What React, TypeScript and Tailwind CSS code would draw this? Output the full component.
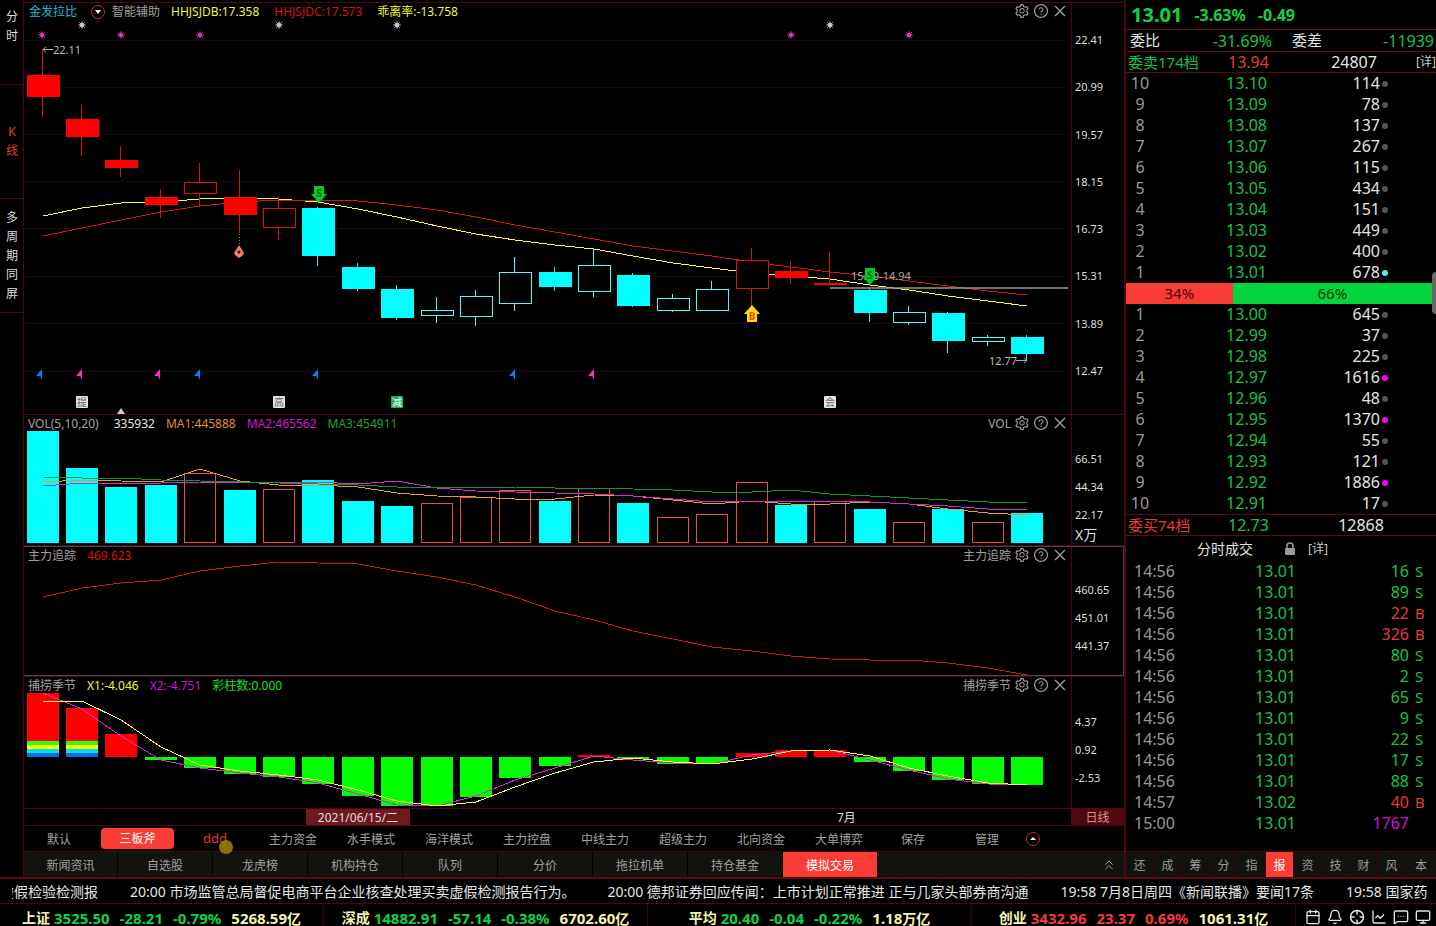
import type { ReactNode } from "react";
import {
  AiOutlineClose,
  AiOutlineQuestionCircle,
  AiOutlineSetting,
} from "react-icons/ai";
import {
  Bell,
  Calendar,
  ChartLine,
  ChevronsUp,
  MessageSquareMore,
  Monitor,
} from "lucide-react";

// x of the n-th trading day in every chart
const dayX = (i: number) => Math.floor(43.2 + i * 39.38);

const linePoints = (ys: number[]) =>
  ys.map((y, i) => `${dayX(i)},${y}`).join(" ");

// [high, top of body, bottom of body, low, kind]
type Candle = [number, number, number, number, "red" | "redOpen" | "cyan" | "cyanOpen"];

const candles: Candle[] = [
  [49, 75, 97, 117, "red"],
  [105, 119, 137, 156, "red"],
  [146, 160, 168, 177, "red"],
  [189, 197, 205, 218, "red"],
  [163, 182, 194, 207, "redOpen"],
  [170, 197, 215, 233, "red"],
  [196, 208, 228, 240, "redOpen"],
  [207, 208, 256, 266, "cyan"],
  [263, 267, 289, 291, "cyan"],
  [285, 289, 318, 320, "cyan"],
  [297, 310, 316, 323, "cyanOpen"],
  [290, 296, 317, 326, "cyanOpen"],
  [257, 272, 304, 311, "cyanOpen"],
  [267, 272, 287, 291, "cyan"],
  [248, 265, 292, 297, "cyanOpen"],
  [273, 275, 306, 307, "cyan"],
  [294, 298, 311, 312, "cyanOpen"],
  [281, 289, 311, 311, "cyanOpen"],
  [248, 260, 289, 306, "redOpen"],
  [261, 271, 278, 284, "red"],
  [252, 283, 285, 285, "red"],
  [289, 290, 313, 322, "cyan"],
  [306, 312, 323, 325, "cyanOpen"],
  [312, 313, 341, 353, "cyan"],
  [335, 337, 342, 346, "cyanOpen"],
  [335, 337, 354, 360, "cyan"],
];

const yellowMa = [
  216, 208, 203, 202, 199, 198, 199, 202, 209, 217, 226, 234, 240, 245, 249,
  256, 263, 268, 273, 276, 279, 285, 290, 296, 301, 306,
];
const redMa = [
  236, 228, 220, 212, 206, 202, 200, 200, 201, 205, 210, 217, 225, 232, 239,
  246, 251, 256, 262, 267, 272, 276, 281, 286, 291, 295,
];

// negative = rising day, drawn hollow
const volumes = [
  431, 468, 487, 485, -473, 490, -489, 480, 501, 506, -503, -497, -490, 501,
  -488, 503, -517, -514, -482, 505, -501, 509, -522, 509, -522, 513,
];
const volMa1 = [
  482, 480, 481, 482, 469, 481, 485, 485, 487, 493, 496, 497, 499, 499, 495,
  496, 500, 504, 501, 504, 504, 502, 504, 509, 513, 515,
];
const volMa2 = [
  486, 483, 483, 483, 482, 482, 482, 482, 484, 481, 488, 491, 492, 493, 494,
  496, 499, 502, 501, 501, 501, 502, 504, 506, 509, 509,
];
const volMa3 = [
  477, 478, 478, 480, 481, 482, 483, 484, 485, 487, 487, 487, 487, 488, 488,
  489, 490, 492, 492, 490, 494, 496, 498, 500, 502, 502,
];

const mainForce = [
  597, 588, 583, 580, 571, 566, 562, 563, 564, 571, 577, 585, 597, 611, 620,
  631, 639, 647, 651, 656, 659, 660, 660, 663, 668, 675,
];

const seasonBars = [
  693, 708, 734, 760, 768, 774, 777, 784, 796, 806, 806, 797, 778, 766, 755,
  759, 764, 763, 753, 750, 750, 762, 771, 780, 784, 785,
];
const seasonX1 = [
  701, 701, 720, 747, 765, 771, 775, 780, 790, 801, 806, 802, 787, 773, 762,
  758, 762, 764, 759, 751, 750, 756, 768, 776, 783, 785,
];
const seasonX2 = [
  693, 709, 736, 760, 768, 773, 777, 783, 794, 805, 806, 796, 780, 768, 756,
  760, 763, 764, 755, 751, 750, 760, 770, 779, 784, 785,
];

const asks: [number, string, number, string?][] = [
  [10, "13.10", 114],
  [9, "13.09", 78],
  [8, "13.08", 137],
  [7, "13.07", 267],
  [6, "13.06", 115],
  [5, "13.05", 434],
  [4, "13.04", 151],
  [3, "13.03", 449],
  [2, "13.02", 400],
  [1, "13.01", 678, "bg-cyan-300"],
];
const bids: [number, string, number, string?][] = [
  [1, "13.00", 645],
  [2, "12.99", 37],
  [3, "12.98", 225],
  [4, "12.97", 1616, "bg-[#f0f]"],
  [5, "12.96", 48],
  [6, "12.95", 1370, "bg-[#f0f]"],
  [7, "12.94", 55],
  [8, "12.93", 121],
  [9, "12.92", 1886, "bg-[#f0f]"],
  [10, "12.91", 17],
];
const sellShare = 34.4;

const trades: [string, string, number, string][] = [
  ["14:56", "13.01", 16, "S"],
  ["14:56", "13.01", 89, "S"],
  ["14:56", "13.01", 22, "B"],
  ["14:56", "13.01", 326, "B"],
  ["14:56", "13.01", 80, "S"],
  ["14:56", "13.01", 2, "S"],
  ["14:56", "13.01", 65, "S"],
  ["14:56", "13.01", 9, "S"],
  ["14:56", "13.01", 22, "S"],
  ["14:56", "13.01", 17, "S"],
  ["14:56", "13.01", 88, "S"],
  ["14:57", "13.02", 40, "B"],
  ["15:00", "13.01", 1767, ""],
];

const indices = [
  { name: "上证", value: "3525.50", diff: "-28.21", pct: "-0.79%", amount: "5268.59", unit: "亿" },
  { name: "深成", value: "14882.91", diff: "-57.14", pct: "-0.38%", amount: "6702.60", unit: "亿" },
  { name: "平均", value: "20.40", diff: "-0.04", pct: "-0.22%", amount: "1.18", unit: "万亿" },
  { name: "创业", value: "3432.96", diff: "23.37", pct: "0.69%", amount: "1061.31", unit: "亿" },
];

const news = [
  "20:00 市场监管总局督促电商平台企业核查处理买卖虚假检测报告行为。",
  "20:00 德邦证券回应传闻：上市计划正常推进 正与几家头部券商沟通",
  "19:58 7月8日周四《新闻联播》要闻17条",
  "19:58 国家药",
];

const templates = ["主力资金", "水手模式", "海洋模式", "主力控盘", "中线主力", "超级主力", "北向资金", "大单博弈"];
const bottomTabs = ["新闻资讯", "自选股", "龙虎榜", "机构持仓", "队列", "分价", "拖拉机单", "持仓基金", "模拟交易"];
const sideTabs = ["还", "成", "筹", "分", "指", "报", "资", "技", "财", "风", "本"];

function Panel({
  header,
  name,
  axis,
  axisClass,
  className = "border-t border-[#4a0812]",
  children,
}: {
  header: ReactNode;
  name?: string;
  axis: ReactNode;
  axisClass: string;
  className?: string;
  children: ReactNode;
}) {
  return (
    <section className={`flex ${className}`}>
      <div className="min-w-0 flex-1">
        <div className="flex h-4 items-center justify-between pr-[3px] pl-1 text-xs leading-4 whitespace-nowrap">
          <div className="flex items-center gap-[11px] pt-[2px]">{header}</div>
          <div className="flex items-center gap-[3px] text-[#a0a0a0]">
            {name && <span className="pt-[2px]">{name}</span>}
            <button aria-label="设置">
              <AiOutlineSetting size={16} />
            </button>
            <button aria-label="帮助">
              <AiOutlineQuestionCircle size={16} />
            </button>
            <button aria-label="关闭">
              <AiOutlineClose size={16} />
            </button>
          </div>
        </div>
        {children}
      </div>
      <div
        className={`flex w-[53px] shrink-0 flex-col border-l border-[#4a0812] pl-[3px] text-[11px] leading-4 text-[#ddd] ${axisClass}`}
      >
        {axis}
      </div>
    </section>
  );
}

function Polyline({ ys, color }: { ys: number[]; color: string }) {
  return (
    <polyline
      points={linePoints(ys)}
      fill="none"
      stroke={color}
      shapeRendering="crispEdges"
    />
  );
}

function Star({ x, y, color }: { x: number; y: number; color: string }) {
  return (
    <g stroke={color} strokeWidth="1">
      <circle cx={x} cy={y} r="2" fill={color} />
      <path
        d={`M${x - 4} ${y}h8M${x} ${y - 4}v8M${x - 3} ${y - 3}l6 6M${x + 3} ${y - 3}l-6 6`}
        opacity="0.7"
      />
    </g>
  );
}

function SellArrow({ x, y }: { x: number; y: number }) {
  return (
    <g>
      <path d={`M${x - 5} ${y}h10v8h3l-8 9l-8 -9h3z`} fill="#0c2" />
      <text x={x} y={y + 11} textAnchor="middle" fontSize="11" fontWeight="bold" fill="#063">
        S
      </text>
    </g>
  );
}

function KLineChart() {
  return (
    <svg viewBox="24 19 1047 395" className="block h-auto w-full">
      <g stroke="#160808" shapeRendering="crispEdges">
        {[41, 88, 135, 182, 229, 277, 324, 372].map((y) => (
          <path key={y} d={`M24 ${y - 0.5}H1068`} />
        ))}
      </g>
      <Polyline ys={yellowMa} color="#ff3" />
      <Polyline ys={redMa} color="#d81414" />
      <g shapeRendering="crispEdges">
        {candles.map(([high, top, bottom, low, kind], i) => {
          const x = dayX(i);
          const open = kind.endsWith("Open");
          const red = kind.startsWith("red");
          const stroke = red ? "#e01010" : open ? "#4ff" : "#0ff";
          return (
            <g key={i} stroke={stroke}>
              <path d={`M${x - 0.5} ${high}V${top}M${x - 0.5} ${bottom}V${low}`} />
              <rect
                x={x - 15.5}
                y={top + 0.5}
                width="32"
                height={bottom - top - 1}
                fill={open ? "#000" : red ? "#f00" : "#0ff"}
                stroke={open ? stroke : red ? "#f00" : "#0ff"}
              />
            </g>
          );
        })}
      </g>

      {[42, 121, 200, 791, 909].map((x) => (
        <Star key={x} x={x} y={35} color="#d03cb0" />
      ))}
      {[82, 279, 397, 830].map((x) => (
        <Star key={x} x={x} y={25} color="#c8c8c8" />
      ))}

      <path d="M43 49.5h10M46 47l-3 2.5l3 2.5" stroke="#aaa" fill="none" />
      <text x="53" y="54" fontSize="11" fill="#bbb">22.11</text>
      <path d="M1016 360.5h11M1024 358l3 2.5l-3 2.5" stroke="#aaa" fill="none" />
      <text x="989" y="365" fontSize="11" fill="#bbb">12.77</text>

      <path d="M239.5 234v12" stroke="#888" strokeDasharray="1 2" />
      <path d="M239 245l5 8l-2 3l-3 2l-3-2l-2-3z" fill="#f08060" />
      <circle cx="239" cy="252" r="1.5" fill="#402" />

      <path d="M830 288h238" stroke="#999" strokeWidth="1.5" />
      <text x="851" y="280" fontSize="11" fill="#aaa">15.50-14.94</text>
      <SellArrow x={319} y={186} />
      <SellArrow x={870} y={268} />
      <path d="M752 305l8 9h-3v8h-10v-8h-3z" fill="#ffe000" />
      <text x="752" y="320" textAnchor="middle" fontSize="10" fontWeight="bold" fill="#f40">
        B
      </text>

      {[40, 198, 316, 513].map((x) => (
        <path key={x} d={`M${x + 2} 369v11l-2 -4h-4z`} fill="#0a7cff" />
      ))}
      {[80, 158, 592].map((x) => (
        <path key={x} d={`M${x + 2} 369v11l-2 -4h-4z`} fill="#ff2cc0" />
      ))}

      {[
        { x: 82, label: "提" },
        { x: 279, label: "高" },
        { x: 397, label: "减" },
        { x: 830, label: "会" },
      ].map(({ x, label }) => (
        <g key={x}>
          <rect x={x - 6} y="396" width="12" height="12" rx="1" fill={label === "减" ? "#18b060" : "#e4e4e4"} />
          <text x={x} y="406" textAnchor="middle" fontSize="10" fill={label === "减" ? "#fff" : "#666"}>
            {label}
          </text>
        </g>
      ))}
      <path d="M121 408l4 6h-8z" fill="#ccc" />
    </svg>
  );
}

function VolumeChart() {
  return (
    <svg viewBox="24 431 1047 114" className="block h-auto w-full">
      <g shapeRendering="crispEdges">
        {volumes.map((v, i) => {
          const top = Math.abs(v);
          return v > 0 ? (
            <rect key={i} x={dayX(i) - 16} y={top} width="32" height={543 - top} fill="#0ff" />
          ) : (
            <rect
              key={i}
              x={dayX(i) - 15.5}
              y={top + 0.5}
              width="31"
              height={542 - top}
              fill="none"
              stroke="#e85048"
            />
          );
        })}
      </g>
      <Polyline ys={volMa1} color="#e0a030" />
      <Polyline ys={volMa2} color="#d828d8" />
      <Polyline ys={volMa3} color="#109838" />
    </svg>
  );
}

function SeasonChart() {
  const zero = 757;
  const stripes = ["#2cff00", "#ff0", "#00e0f0", "#0070f0"];
  return (
    <svg viewBox="24 693 1047 115" className="block h-auto w-full">
      <g shapeRendering="crispEdges">
        {seasonBars.map((y, i) => (
          <rect
            key={i}
            x={dayX(i) - 16}
            y={Math.min(y, zero)}
            width="32"
            height={Math.abs(y - zero)}
            fill={y < zero ? "#f00" : "#0f0"}
          />
        ))}
        {[0, 1].map((i) =>
          stripes.map((fill, n) => (
            <rect key={`${i}-${n}`} x={dayX(i) - 16} y={741 + n * 4} width="32" height="4" fill={fill} />
          ))
        )}
      </g>
      <Polyline ys={seasonX2} color="#d828d8" />
      <Polyline ys={seasonX1} color="#ff3" />
    </svg>
  );
}

function OrderRows({ rows, label }: { rows: typeof asks; label: string }) {
  return (
    <table aria-label={label} className="w-full table-fixed text-base leading-[21px]">
      <colgroup>
        <col className="w-7" />
        <col className="w-[113px]" />
        <col className="w-[113px]" />
        <col />
      </colgroup>
      <tbody>
        {rows.map(([level, price, vol, dot]) => (
          <tr key={level} className="h-[21px]">
            <td className="text-center text-[#999]">{level}</td>
            <td className="text-right text-[#18c050]">{price}</td>
            <td className="text-right text-[#e4e4e4]">{vol}</td>
            <td>
              <span className={`ml-[2px] block size-[6px] rounded-full ${dot ?? "bg-[#555]"}`} />
            </td>
          </tr>
        ))}
      </tbody>
    </table>
  );
}

function QuotePanel() {
  return (
    <aside className="relative flex w-[312px] shrink-0 flex-col overflow-hidden border-l-2 border-[#4a0812] whitespace-nowrap">
      <div className="flex h-[29px] items-center gap-3 pl-[5px] text-base leading-5 font-bold text-[#10d048]">
        <span className="text-xl leading-5">13.01</span>
        <span>-3.63%</span>
        <span>-0.49</span>
      </div>
      <div className="flex h-[22px] items-center border-t border-[#5c0a14] pr-[2px] pl-1 text-base text-[#18c050]">
        <span className="w-[61px] text-[15px] text-[#e4e4e4]">委比</span>
        <span className="w-[81px] text-right">-31.69%</span>
        <span className="ml-5 text-[15px] text-[#e4e4e4]">委差</span>
        <span className="ml-auto">-11939</span>
      </div>
      <div className="flex h-[21px] items-center border-t border-[#5c0a14] pl-[2px] text-base">
        <span className="w-[100px] text-[15px] text-[#18c050]">委卖174档</span>
        <span className="text-[#e43c3c]">13.94</span>
        <span className="w-[108px] text-right text-[#e4e4e4]">24807</span>
        <button className="ml-auto text-xs text-[#ccc]">[详]</button>
      </div>
      <div className="border-t border-[#5c0a14]">
        <OrderRows rows={asks} label="委卖" />
      </div>
      <div className="flex h-[21px] text-center text-[15px] leading-[21px]">
        <div className="bg-[#fa3c36] text-[#4a0a08]" style={{ width: `${sellShare}%` }}>
          34%
        </div>
        <div className="flex-1 bg-[#04d43c] pr-1 text-[#04380e]">66%</div>
      </div>
      <OrderRows rows={bids} label="委买" />
      <div className="flex h-[22px] items-center border-y border-[#5c0a14] pl-[2px] text-base">
        <span className="w-[100px] text-[15px] text-[#e43c3c]">委买74档</span>
        <span className="text-[#18c050]">12.73</span>
        <span className="w-[115px] text-right text-[#e4e4e4]">12868</span>
      </div>
      <div className="flex h-[25px] items-center pl-[71px] text-sm text-[#e4e4e4]">
        <span>分时成交</span>
        <svg viewBox="0 0 12 14" className="ml-[31px] h-[14px] w-3" fill="none">
          <path d="M3 7V4a3 3 0 0 1 6 0v3" stroke="#999" strokeWidth="1.5" />
          <rect x="1" y="6" width="10" height="7" rx="1" fill="#999" />
        </svg>
        <button className="ml-3 text-xs text-[#ccc]">[详]</button>
      </div>
      <table aria-label="分时成交" className="w-full table-fixed text-base leading-[21px]">
        <colgroup>
          <col className="w-[70px]" />
          <col className="w-[100px]" />
          <col className="w-[113px]" />
          <col />
        </colgroup>
        <tbody>
          {trades.map(([time, price, vol, side], i) => {
            const tone =
              side === "S" ? "text-[#18c050]" : side === "B" ? "text-[#e43c3c]" : "text-[#d010d0]";
            return (
              <tr key={i} className="h-[21px]">
                <td className="pl-2 text-[#999]">{time}</td>
                <td className="text-right text-[#18c050]">{price}</td>
                <td className={`text-right ${tone}`}>{vol}</td>
                <td className={`pl-[6px] text-[15px] leading-[21px] ${tone}`}>{side}</td>
              </tr>
            );
          })}
        </tbody>
      </table>
      <div className="mt-auto flex h-[26px] border-t border-[#4a0812] bg-[#12120e] text-xs text-[#999]">
        {sideTabs.map((t) => (
          <button
            key={t}
            className={`border-r border-[#38060e] pt-[2px] last:flex-1 last:border-r-0 ${
              t === "报" ? "w-7 bg-[#fa3c36] text-white" : "w-7"
            }`}
          >
            {t}
          </button>
        ))}
      </div>
      <div className="absolute top-[272px] right-0 h-[42px] w-1 rounded-l bg-[#666]" />
    </aside>
  );
}

function Sidebar() {
  return (
    <nav className="flex w-6 shrink-0 flex-col border-r border-[#4a0812] text-xs leading-[19px] text-[#ddd]">
      <button className="h-[85px] border-b border-[#4a0812] pt-[7px] pr-[5px] pb-10 pl-[6px]">分时</button>
      <button className="h-[114px] border-b border-[#4a0812] pr-[5px] pb-[2px] pl-[6px] text-[#e43c3c]">
        K<br />线
      </button>
      <button className="h-[114px] border-b border-[#4a0812] pr-[5px] pl-[6px]">多周期同屏</button>
    </nav>
  );
}

export default function App() {
  return (
    <div className="overflow-hidden bg-black font-['Noto_Sans','Noto_Sans_CJK_SC',sans-serif]">
      <div className="flex">
        <Sidebar />
        <main className="min-w-0 flex-1 pt-[2px]">
          <Panel
            header={
              <>
                <span className="ml-px text-[#20b8d8]">金发拉比</span>
                <div className="flex items-center gap-[7px]">
                  <button
                    aria-label="选择股票"
                    className="ml-[3px] flex size-[14px] items-center justify-center rounded-full border border-[#c03030] text-white"
                  >
                    <svg viewBox="0 0 6 4" className="h-1 w-[6px]" fill="currentColor">
                      <path d="M0 0h6L3 4z" />
                    </svg>
                  </button>
                  <span className="text-[#a0a0a0]">智能辅助</span>
                </div>
                <div className="flex gap-[15px]">
                  <span className="text-[#f4f43c]">HHJSJDB:17.358</span>
                  <span className="text-[#d81414]">HHJSJDC:17.573</span>
                  <span className="text-[#f4f43c]">乖离率:-13.758</span>
                </div>
              </>
            }
            axisClass="justify-between pt-[29px] pb-[35px]"
            axis={["22.41", "20.99", "19.57", "18.15", "16.73", "15.31", "13.89", "12.47"].map((v) => (
              <span key={v}>{v}</span>
            ))}
          >
            <KLineChart />
          </Panel>

          <Panel
            className="border-y border-[#4a0812]"
            header={
              <>
                <span className="text-[#a0a0a0]">VOL(5,10,20)</span>
                <span className="ml-1 text-[#e4e4e4]">335932</span>
                <span className="text-[#e0902c]">MA1:445888</span>
                <span className="text-[#d818d8]">MA2:465562</span>
                <span className="text-[#18a838]">MA3:454911</span>
              </>
            }
            name="VOL"
            axisClass="gap-3 pt-9"
            axis={
              <>
                <span>66.51</span>
                <span>44.34</span>
                <span>22.17</span>
                <span className="-mt-2 text-sm leading-4">X万</span>
              </>
            }
          >
            <VolumeChart />
          </Panel>

          <Panel
            className="border-y border-[#4c4448] shadow-[inset_-1px_0_#4c4448]"
            header={
              <>
                <span className="text-[#a0a0a0]">主力追踪</span>
                <span className="text-[#d81414]">469.623</span>
              </>
            }
            name="主力追踪"
            axisClass="gap-3 pt-[35px]"
            axis={
              <>
                <span>460.65</span>
                <span>451.01</span>
                <span>441.37</span>
              </>
            }
          >
            <svg viewBox="24 563 1047 112" className="block h-auto w-full overflow-visible">
              <Polyline ys={mainForce} color="#d81414" />
            </svg>
          </Panel>

          <Panel
            header={
              <>
                <span className="text-[#a0a0a0]">捕捞季节</span>
                <span className="text-[#f4f43c]">X1:-4.046</span>
                <span className="text-[#c818c8]">X2:-4.751</span>
                <span className="text-[#18e028]">彩柱数:0.000</span>
              </>
            }
            name="捕捞季节"
            axisClass="gap-3 pt-[37px]"
            axis={
              <>
                <span>4.37</span>
                <span>0.92</span>
                <span>-2.53</span>
              </>
            }
          >
            <SeasonChart />
          </Panel>

          <div className="flex h-[17px] border-t border-[#4a0812] text-xs leading-[18px] text-[#ddd]">
            <span className="ml-[282px] w-[104px] bg-[#701820] text-center">2021/06/15/二</span>
            <span className="ml-[427px]">7月</span>
            <button className="ml-auto w-[53px] bg-[#500810] text-[#d89090]">日线</button>
          </div>

          <div className="flex h-[26px] items-center border-t border-[#4a0812] text-xs whitespace-nowrap text-[#a0a0a0]">
            <button className="w-[70px] pt-[2px]">默认</button>
            <button className="mr-[2px] ml-[7px] h-[21px] w-[73px] rounded-sm bg-[#fa3c36] pt-px text-white">
              三板斧
            </button>
            <button className="relative w-[78px] text-[13px] text-[#e43c3c]">
              ddd
              <span className="absolute top-[10px] left-[43px] size-[14px] rounded-full bg-[#a89000]/80" />
            </button>
            {templates.map((t) => (
              <button key={t} className="w-[78px] pt-[2px]">
                {t}
              </button>
            ))}
            <button className="w-[70px] pt-[2px]">保存</button>
            <button className="w-[78px] pt-[2px]">管理</button>
            <button
              aria-label="收起"
              className="flex size-[14px] items-center justify-center rounded-full border border-[#c03030] text-white"
            >
              <svg viewBox="0 0 6 3" className="h-[3px] w-[6px]" fill="currentColor">
                <path d="M0 3h6L3 0z" />
              </svg>
            </button>
          </div>

          <div className="flex h-[26px] border-t border-[#4a0812] bg-[#12120e] text-xs text-[#a0a0a0]">
            {bottomTabs.map((t) => (
              <button
                key={t}
                className={`w-[95px] border-r border-black pt-[2px] first:w-[94px] ${
                  t === "模拟交易" ? "bg-[#fa3c36] text-white" : ""
                }`}
              >
                {t}
              </button>
            ))}
            <button aria-label="展开" className="mr-[7px] ml-auto">
              <ChevronsUp size={16} strokeWidth={1.5} />
            </button>
          </div>
        </main>
        <QuotePanel />
      </div>

      <div className="flex h-[26px] items-center gap-8 overflow-hidden border-t-2 border-[#5c0a14] pt-[2px] text-sm whitespace-nowrap text-[#e4e4e4]">
        <div className="ml-3 flex w-[86px] shrink-0 justify-end overflow-hidden">虚假检验检测报</div>
        {news.map((n) => (
          <a key={n} href="#">
            {n}
          </a>
        ))}
      </div>

      <footer className="flex h-[23px] border-t border-[#4a0812] text-[15px] leading-4 font-bold whitespace-nowrap">
        {indices.map((it) => (
          <div key={it.name} className="flex flex-1 justify-center gap-[10px] border-r border-[#38060e] pt-[6px]">
            <span className="-mr-[6px] text-sm leading-4 text-[#f4f4b0]">{it.name}</span>
            {[it.value, it.diff, it.pct].map((v) => (
              <span key={v} className={it.diff.startsWith("-") ? "text-[#10d048]" : "text-[#f03c3c]"}>
                {v}
              </span>
            ))}
            <span className="text-[#f4f4b0]">
              {it.amount}
              <span className="text-sm leading-4">{it.unit}</span>
            </span>
          </div>
        ))}
        <div className="flex w-[140px] items-center gap-[6px] pt-[3px] pl-[9px] text-[#e4e4e4]">
          <button aria-label="日历"><Calendar size={16} /></button>
          <button aria-label="提醒"><Bell size={16} /></button>
          <button aria-label="定位">
            <svg viewBox="0 0 16 16" className="size-4" fill="none" stroke="currentColor" strokeWidth="1.5">
              <circle cx="8" cy="8" r="6.5" />
              <path d="M8 1.5v4M8 10.5v4M1.5 8h4M10.5 8h4" />
            </svg>
          </button>
          <button aria-label="行情"><ChartLine size={16} /></button>
          <button aria-label="消息"><MessageSquareMore size={16} /></button>
          <button aria-label="桌面"><Monitor size={16} /></button>
        </div>
      </footer>
    </div>
  );
}
